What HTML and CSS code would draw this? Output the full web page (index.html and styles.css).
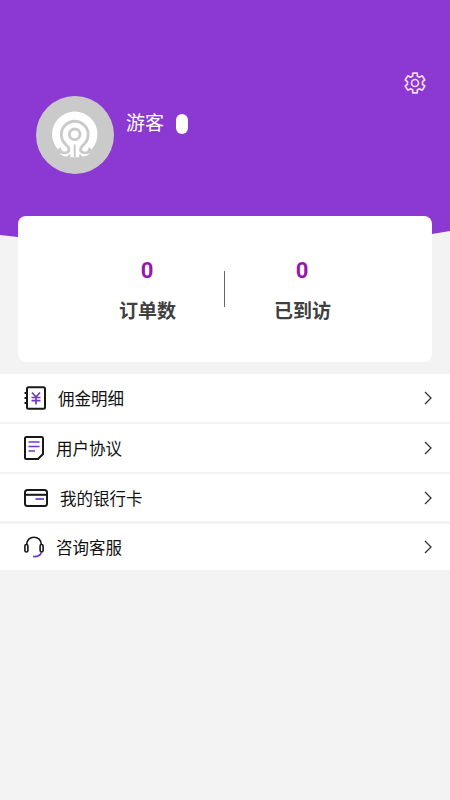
FILE: index.html
```html
<!DOCTYPE html>
<html lang="zh-CN">
<head>
<meta charset="utf-8">
<title>我的</title>
<link rel="stylesheet" href="styles.css">
</head>
<body>
<header class="hero">
  <svg class="settings" viewBox="0 0 24 24"><path d="M9.500 1.200h5v3.200l2.300 1.300 3-1.600 2.900 4.600-2.500 1.800v3l2.500 1.800-2.900 4.600-3-1.600-2.300 1.300v3.200h-5v-3.200l-2.300-1.300-3 1.600-2.900-4.600 2.500-1.800v-3L1.300 8.700l2.900-4.600 3 1.600 2.300-1.300z"/><circle cx="12" cy="12" r="3.800"/></svg>
  <div class="profile">
    <svg class="avatar" viewBox="0 0 78 78">
      <circle cx="39" cy="39" r="39" fill="#cacaca"/>
      <path d="M22 53.500A22.700 22.700 0 1 1 55.500 53.500L53 51 51.500 54.500 54 57Q51 60.500 46.500 60.500L43.500 57.500 43 61.300H34.500L34 57.500 31 60.500Q26.500 60.500 23.500 57L26 54.500 24.500 51Z" fill="#fff"/>
      <g fill="none" stroke="#cacaca" stroke-width="2.800">
        <path d="M24 55.500C28 58 33 57 33 53.500Q33 51.500 30.500 49.200A13.400 13.400 0 1 1 47 49.200Q44.500 51.500 44.500 53.500C44.500 57 49.500 58 53.500 55.500"/>
        <circle cx="38.700" cy="38.300" r="5.300"/>
        <path d="M38.700 48.500v13" stroke-width="2"/>
      </g>
    </svg>
    <span class="name">游客</span>
    <span class="pill"></span>
  </div>
</header>
<section class="stats">
  <div class="stat"><b class="num">0</b><span class="label">订单数</span></div>
  <div class="divider"></div>
  <div class="stat"><b class="num">0</b><span class="label">已到访</span></div>
</section>
<nav class="menu">
  <a class="row">
    <svg class="icon book" viewBox="0 0 22 24"><rect x="3" y="1.200" width="18" height="21.500" rx="1.500"/><path d="M.5 7H3M.5 12H3M.5 17H3"/><path class="accent" d="M8 6.500l4 4.500 4-4.500M12 11v7.500M7.500 11.500h9M7.500 14.700h9"/></svg>
    <span>佣金明细</span><svg class="chevron" viewBox="0 0 8 14"><path d="M1 1l6 6-6 6"/></svg>
  </a>
  <a class="row">
    <svg class="icon page" viewBox="0 0 20 24"><path d="M2.500 1h15Q19 1 19 2.500V18l-5 5H2.500Q1 23 1 21.500v-19Q1 1 2.500 1z"/><path class="accent" d="M4.500 6h11M4.500 10.500h11M4.500 15h6.500"/></svg>
    <span>用户协议</span><svg class="chevron" viewBox="0 0 8 14"><path d="M1 1l6 6-6 6"/></svg>
  </a>
  <a class="row">
    <svg class="icon card" viewBox="0 0 24 18"><rect x="1" y="1" width="22" height="16" rx="2.500"/><path d="M1 5.800h22"/><path class="accent" d="M11.500 10h8.500"/></svg>
    <span>我的银行卡</span><svg class="chevron" viewBox="0 0 8 14"><path d="M1 1l6 6-6 6"/></svg>
  </a>
  <a class="row">
    <svg class="icon headset" viewBox="0 0 20 22"><path d="M2.700 8.500C2.700 4 6 1.200 10 1.200s7.300 2.800 7.300 7.300"/><rect x=".9" y="8.500" width="3" height="7.500" rx="1.500"/><rect x="16.100" y="8.500" width="3" height="7.500" rx="1.500"/><path class="accent" d="M17.300 16.500c-.8 3-3.800 4.300-8.300 4"/></svg>
    <span>咨询客服</span><svg class="chevron" viewBox="0 0 8 14"><path d="M1 1l6 6-6 6"/></svg>
  </a>
</nav>
</body>
</html>
```
FILE: styles.css
```css
* { box-sizing: border-box; }
body {
  margin: 0;
  min-height: 800px;
  background: #f3f3f3;
  font-family: "Noto Sans CJK SC", sans-serif;
}
.hero {
  display: flex;
  flex-direction: column;
  height: 250px;
  padding-top: 72px;
  background: #8c38d3;
  clip-path: polygon(0 0, 100% 0, 100% 231px, 432px 234px, 350px 245px, 100px 245px, 18px 237px, 0 235px);
}
.settings {
  align-self: flex-end;
  width: 22px;
  height: 22px;
  margin-right: 24px;
  fill: none;
  stroke: #f8dcff;
  stroke-width: 1.8;
  stroke-linejoin: round;
}
.profile {
  display: flex;
  align-items: flex-start;
  margin: 2px 0 0 36px;
}
.avatar { width: 78px; height: 78px; }
.name {
  margin: 12px 0 0 12px;
  color: #fff;
  font-size: 19px;
  line-height: 28px;
}
.pill {
  width: 12px;
  height: 20px;
  margin: 18px 0 0 12px;
  border-radius: 6px;
  background: #fff;
}
.stats {
  position: relative;
  display: flex;
  height: 146px;
  margin: -34px 18px 0;
  padding: 0 53px 0 52px;
  border-radius: 8px;
  background: #fff;
}
.stat {
  flex: 1;
  display: flex;
  flex-direction: column;
  align-items: center;
  padding-top: 40px;
}
.num {
  color: #9417ae;
  font: bold 22px/30px Roboto, sans-serif;
}
.label {
  margin: 10px 0 0 1px;
  color: #404040;
  font-size: 19px;
  font-weight: 700;
  line-height: 28px;
}
.divider {
  width: 1px;
  height: 36px;
  margin-top: 55px;
  background: #666;
}
.menu {
  display: grid;
  grid-template-rows: 47.5px 47.5px 47px 46.5px;
  gap: 2.5px;
  margin-top: 12px;
}
.row {
  display: flex;
  align-items: center;
  padding: 0 18px 0 24px;
  background: #fff;
  color: #111;
  font-size: 16.5px;
  line-height: 24px;
}
.icon {
  flex: none;
  fill: none;
  stroke: #181818;
  stroke-width: 2;
}
.icon .accent { stroke: #7138c8; stroke-width: 1.7; }
.book { width: 22px; height: 24px; margin-right: 12px; }
.page { width: 20px; height: 24px; margin-right: 12px; }
.card { width: 24px; height: 18px; margin-right: 12px; }
.icon.headset { width: 20px; height: 22px; margin-right: 12px; stroke-width: 1.6; }
.chevron {
  width: 8px;
  height: 14px;
  margin-left: auto;
  fill: none;
  stroke: #333;
  stroke-width: 1.3;
}
```
